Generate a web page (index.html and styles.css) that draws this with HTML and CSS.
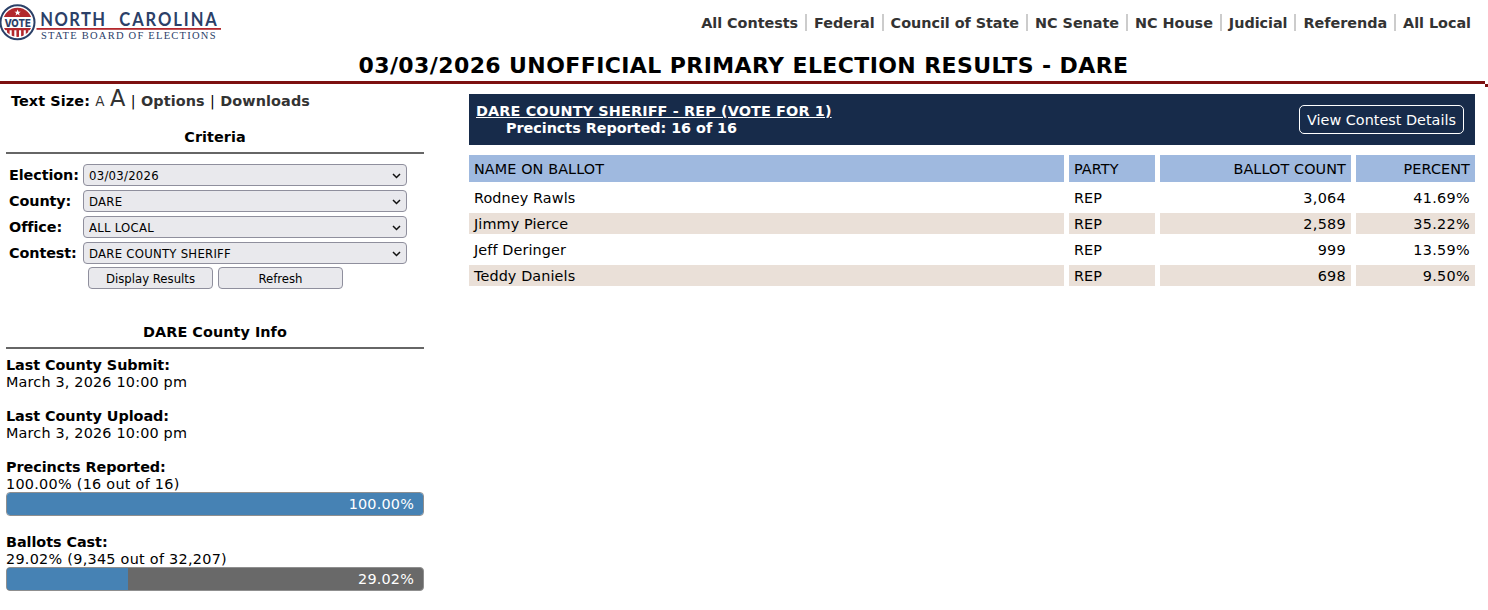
FILE: index.html
```html
<!DOCTYPE html>
<html lang="en">
  <head>
    <meta charset="UTF-8" />
    <meta name="viewport" content="width=device-width, initial-scale=1.0" />
    <title>NC SBE Contest Results</title>
    <link rel="stylesheet" href="styles.css">
  </head>
  <body>
    <header class="header">
      <div class="topbar">
        <svg class="logo" width="222" height="44" viewBox="0 0 222 44">
          <defs>
            <clipPath id="seal"><circle cx="17.5" cy="22.3" r="14.6" /></clipPath>
          </defs>
          <circle cx="17.5" cy="22.3" r="17" fill="#fff" stroke="#2b4068" stroke-width="2" />
          <g clip-path="url(#seal)">
            <rect x="2" y="7" width="31" height="10" fill="#b3282d" />
            <path d="M2 28h31v2.2H2zM7 29h2.6v9H7zM11.7 29h2.6v9h-2.6zM16.4 29H19v9h-2.6zM21.1 29h2.6v9h-2.6zM25.8 29h2.6v9h-2.6z" fill="#b3282d" />
          </g>
          <path d="M17.6 9.6l.9 2.1h2.3l-1.8 1.4.6 2.3-2-1.3-2 1.3.6-2.3-1.8-1.4h2.3z" fill="#fff" />
          <text class="logo-vote" x="4.4" y="26.5" textLength="26.4" lengthAdjust="spacingAndGlyphs">VOTE</text>
          <g transform="translate(40.2 26) scale(0.92 1)">
            <text class="logo-name" x="0" y="0" textLength="70.5">NORTH</text>
            <text class="logo-name" x="86" y="0" textLength="106">CAROLINA</text>
          </g>
          <rect x="36.5" y="28" width="184.5" height="1.8" fill="#b3282d" />
          <text class="logo-sub" x="41" y="38.6" textLength="174.5">STATE BOARD OF ELECTIONS</text>
        </svg>
        <nav class="nav">
          <a href="#">All Contests</a>
          <a href="#">Federal</a>
          <a href="#">Council of State</a>
          <a href="#">NC Senate</a>
          <a href="#">NC House</a>
          <a href="#">Judicial</a>
          <a href="#">Referenda</a>
          <a href="#">All Local</a>
        </nav>
      </div>
      <h1>03/03/2026 UNOFFICIAL PRIMARY ELECTION RESULTS - DARE</h1>
    </header>

    <div class="content">
      <aside class="sidebar">
        <div class="tools">
          <b>Text Size:</b>
          <a href="#" class="text-small">A</a>
          <a href="#" class="text-large">A</a>
          <span>|</span>
          <a href="#"><b>Options</b></a>
          <span>|</span>
          <a href="#"><b>Downloads</b></a>
        </div>

        <h2>Criteria</h2>
        <form class="criteria">
          <label for="election">Election:</label>
          <div class="field">
            <select id="election"><option>03/03/2026</option></select>
            <svg width="9" height="6" viewBox="0 0 9 6"><path d="M1 1l3.5 3.5L8 1" /></svg>
          </div>
          <label for="county">County:</label>
          <div class="field">
            <select id="county"><option>DARE</option></select>
            <svg width="9" height="6" viewBox="0 0 9 6"><path d="M1 1l3.5 3.5L8 1" /></svg>
          </div>
          <label for="office">Office:</label>
          <div class="field">
            <select id="office"><option>ALL LOCAL</option></select>
            <svg width="9" height="6" viewBox="0 0 9 6"><path d="M1 1l3.5 3.5L8 1" /></svg>
          </div>
          <label for="contest">Contest:</label>
          <div class="field">
            <select id="contest"><option>DARE COUNTY SHERIFF</option></select>
            <svg width="9" height="6" viewBox="0 0 9 6"><path d="M1 1l3.5 3.5L8 1" /></svg>
          </div>
        </form>
        <div class="buttons">
          <button type="button">Display Results</button>
          <button type="button">Refresh</button>
        </div>

        <h2 class="info-title">DARE County Info</h2>
        <div class="info">
          <b>Last County Submit:</b>
          <p>March 3, 2026 10:00 pm</p>
        </div>
        <div class="info">
          <b>Last County Upload:</b>
          <p>March 3, 2026 10:00 pm</p>
        </div>
        <div class="info">
          <b>Precincts Reported:</b>
          <p class="total">100.00% (16 out of 16)</p>
          <div class="bar">
            <div class="bar-fill" style="width: 100%"></div>
            <span>100.00%</span>
          </div>
        </div>
        <div class="info">
          <b>Ballots Cast:</b>
          <p class="total">29.02% (9,345 out of 32,207)</p>
          <div class="bar">
            <div class="bar-fill" style="width: 29.02%"></div>
            <span>29.02%</span>
          </div>
        </div>
      </aside>

      <main class="results">
        <div class="contest-header">
          <div>
            <a href="#" class="contest-name">DARE COUNTY SHERIFF - REP (VOTE FOR 1)</a>
            <p class="contest-precincts">Precincts Reported: 16 of 16</p>
          </div>
          <a href="#" class="details">View Contest Details</a>
        </div>
        <table>
          <thead>
            <tr><th>NAME ON BALLOT</th><th class="party">PARTY</th><th class="count">BALLOT COUNT</th><th class="percent">PERCENT</th></tr>
          </thead>
          <tbody>
            <tr><td>Rodney Rawls</td><td>REP</td><td class="num">3,064</td><td class="num">41.69%</td></tr>
            <tr><td>Jimmy Pierce</td><td>REP</td><td class="num">2,589</td><td class="num">35.22%</td></tr>
            <tr><td>Jeff Deringer</td><td>REP</td><td class="num">999</td><td class="num">13.59%</td></tr>
            <tr><td>Teddy Daniels</td><td>REP</td><td class="num">698</td><td class="num">9.50%</td></tr>
          </tbody>
        </table>
      </main>
    </div>
  </body>
</html>
```

FILE: styles.css
```css
* {
  box-sizing: border-box;
}
body {
  margin: 0;
  font-family: Verdana, "DejaVu Sans", sans-serif;
  font-size: 14.4px;
  line-height: 17px;
  color: #000;
  background-color: #fff;
  overflow: hidden;
}
p {
  margin: 0;
}
a {
  color: #333;
  text-decoration: none;
}
.header {
  position: relative;
  width: 1485px;
  height: 84px;
  border-bottom: 3px solid #7c1010;
}
.header::after {
  content: "";
  position: absolute;
  right: -3px;
  bottom: -6px;
  width: 3px;
  height: 3px;
  background-color: #7c1010;
}
.topbar {
  display: flex;
  justify-content: space-between;
  height: 46px;
}
.logo {
  display: block;
}
.logo-vote {
  font: 800 11px Inter, sans-serif;
  fill: #2b4068;
}
.logo-name {
  font: bold 18px Lato, sans-serif;
  fill: #2b4068;
}
.logo-sub {
  font: 10.5px "Liberation Serif", serif;
  fill: #2b4068;
}
.nav {
  display: flex;
  padding: 14px 7px 0 0;
  letter-spacing: -0.04px;
}
.nav a {
  height: 17px;
  padding: 0 7px;
  border-right: 2px solid #ccc;
  font-weight: bold;
  line-height: 18px;
}
.nav a:last-child {
  border-right: none;
}
h1 {
  margin: 0;
  padding-left: 2px;
  font-size: 22px;
  line-height: 39px;
  letter-spacing: 0.4px;
  text-align: center;
}
.content {
  display: flex;
  gap: 45px;
  padding-left: 6px;
}
.sidebar {
  width: 418px;
}
.tools {
  display: flex;
  align-items: baseline;
  gap: 5.3px;
  height: 40px;
  padding-left: 5px;
  line-height: 29px;
  letter-spacing: 0.1px;
}
.text-small {
  font-size: 13.5px;
}
.text-large {
  font-size: 22.5px;
}
h2 {
  height: 30px;
  margin: 0;
  border-bottom: 2px solid #666;
  font-size: 14.4px;
  line-height: 26px;
  letter-spacing: 0.05px;
  text-align: center;
}
.criteria {
  display: grid;
  grid-template-columns: 74px 324px;
  grid-auto-rows: 22px;
  row-gap: 4px;
  padding: 10px 0 0 3px;
}
.criteria label {
  font-weight: bold;
  line-height: 23px;
  letter-spacing: -0.1px;
}
.field {
  position: relative;
}
.field svg {
  position: absolute;
  right: 6px;
  top: 9px;
  fill: none;
  stroke: #111;
  stroke-width: 1.5;
}
select,
button {
  font-family: Tahoma, "DejaVu Sans Condensed", "Noto Sans", sans-serif;
  font-size: 13px;
  color: #000;
  background-color: #e9e9ed;
  border: 1px solid #8f8f9d;
  border-radius: 4px;
}
select {
  display: block;
  width: 100%;
  height: 22px;
  padding: 0 5px;
  letter-spacing: 0.25px;
  appearance: none;
}
.buttons {
  display: flex;
  gap: 5px;
  padding: 3px 0 0 82px;
}
button {
  width: 125px;
  height: 22px;
  padding: 0;
}
.info-title {
  margin: 30px 0 8px;
}
.info {
  margin-bottom: 17px;
  letter-spacing: 0.18px;
}
.info b {
  display: block;
  letter-spacing: -0.06px;
}
.total {
  letter-spacing: 0.27px;
}
.bar {
  position: relative;
  height: 24px;
  margin: -1px 0 18px;
  border: 1px solid #8f8f8f;
  border-radius: 4px;
  background-color: #696969;
  overflow: hidden;
}
.bar-fill {
  height: 100%;
  background-color: #4682b4;
}
.bar span {
  position: absolute;
  right: 9px;
  top: 3px;
  color: #fff;
}
.results {
  width: 1006px;
  padding-top: 10px;
}
.contest-header {
  display: flex;
  justify-content: space-between;
  height: 51px;
  padding: 9px 11px 0 7px;
  background-color: #172b4a;
  color: #fff;
  font-weight: bold;
}
.contest-header a {
  color: #fff;
}
.contest-name {
  letter-spacing: 0.13px;
  text-decoration: underline;
}
.contest-precincts {
  padding-left: 30px;
  letter-spacing: -0.04px;
}
.details {
  width: 165px;
  height: 29px;
  margin-top: 2px;
  border: 1px solid #fff;
  border-radius: 5px;
  font-weight: normal;
  line-height: 28px;
  text-align: center;
}
table {
  width: 1016px;
  margin: 5px -5px 0;
  border-collapse: separate;
  border-spacing: 5px;
  table-layout: fixed;
}
th,
td {
  height: 21px;
  padding: 2px 5px 0;
  text-align: left;
  font-weight: normal;
  letter-spacing: 0.1px;
}
th {
  height: 27px;
  background-color: #9fb9df;
}
.party {
  width: 86px;
}
.count {
  width: 191px;
  text-align: right;
}
.percent {
  width: 119px;
  text-align: right;
}
.num {
  text-align: right;
  letter-spacing: 0.3px;
}
tbody tr:nth-child(even) td {
  background-color: #eae0d8;
}
```
